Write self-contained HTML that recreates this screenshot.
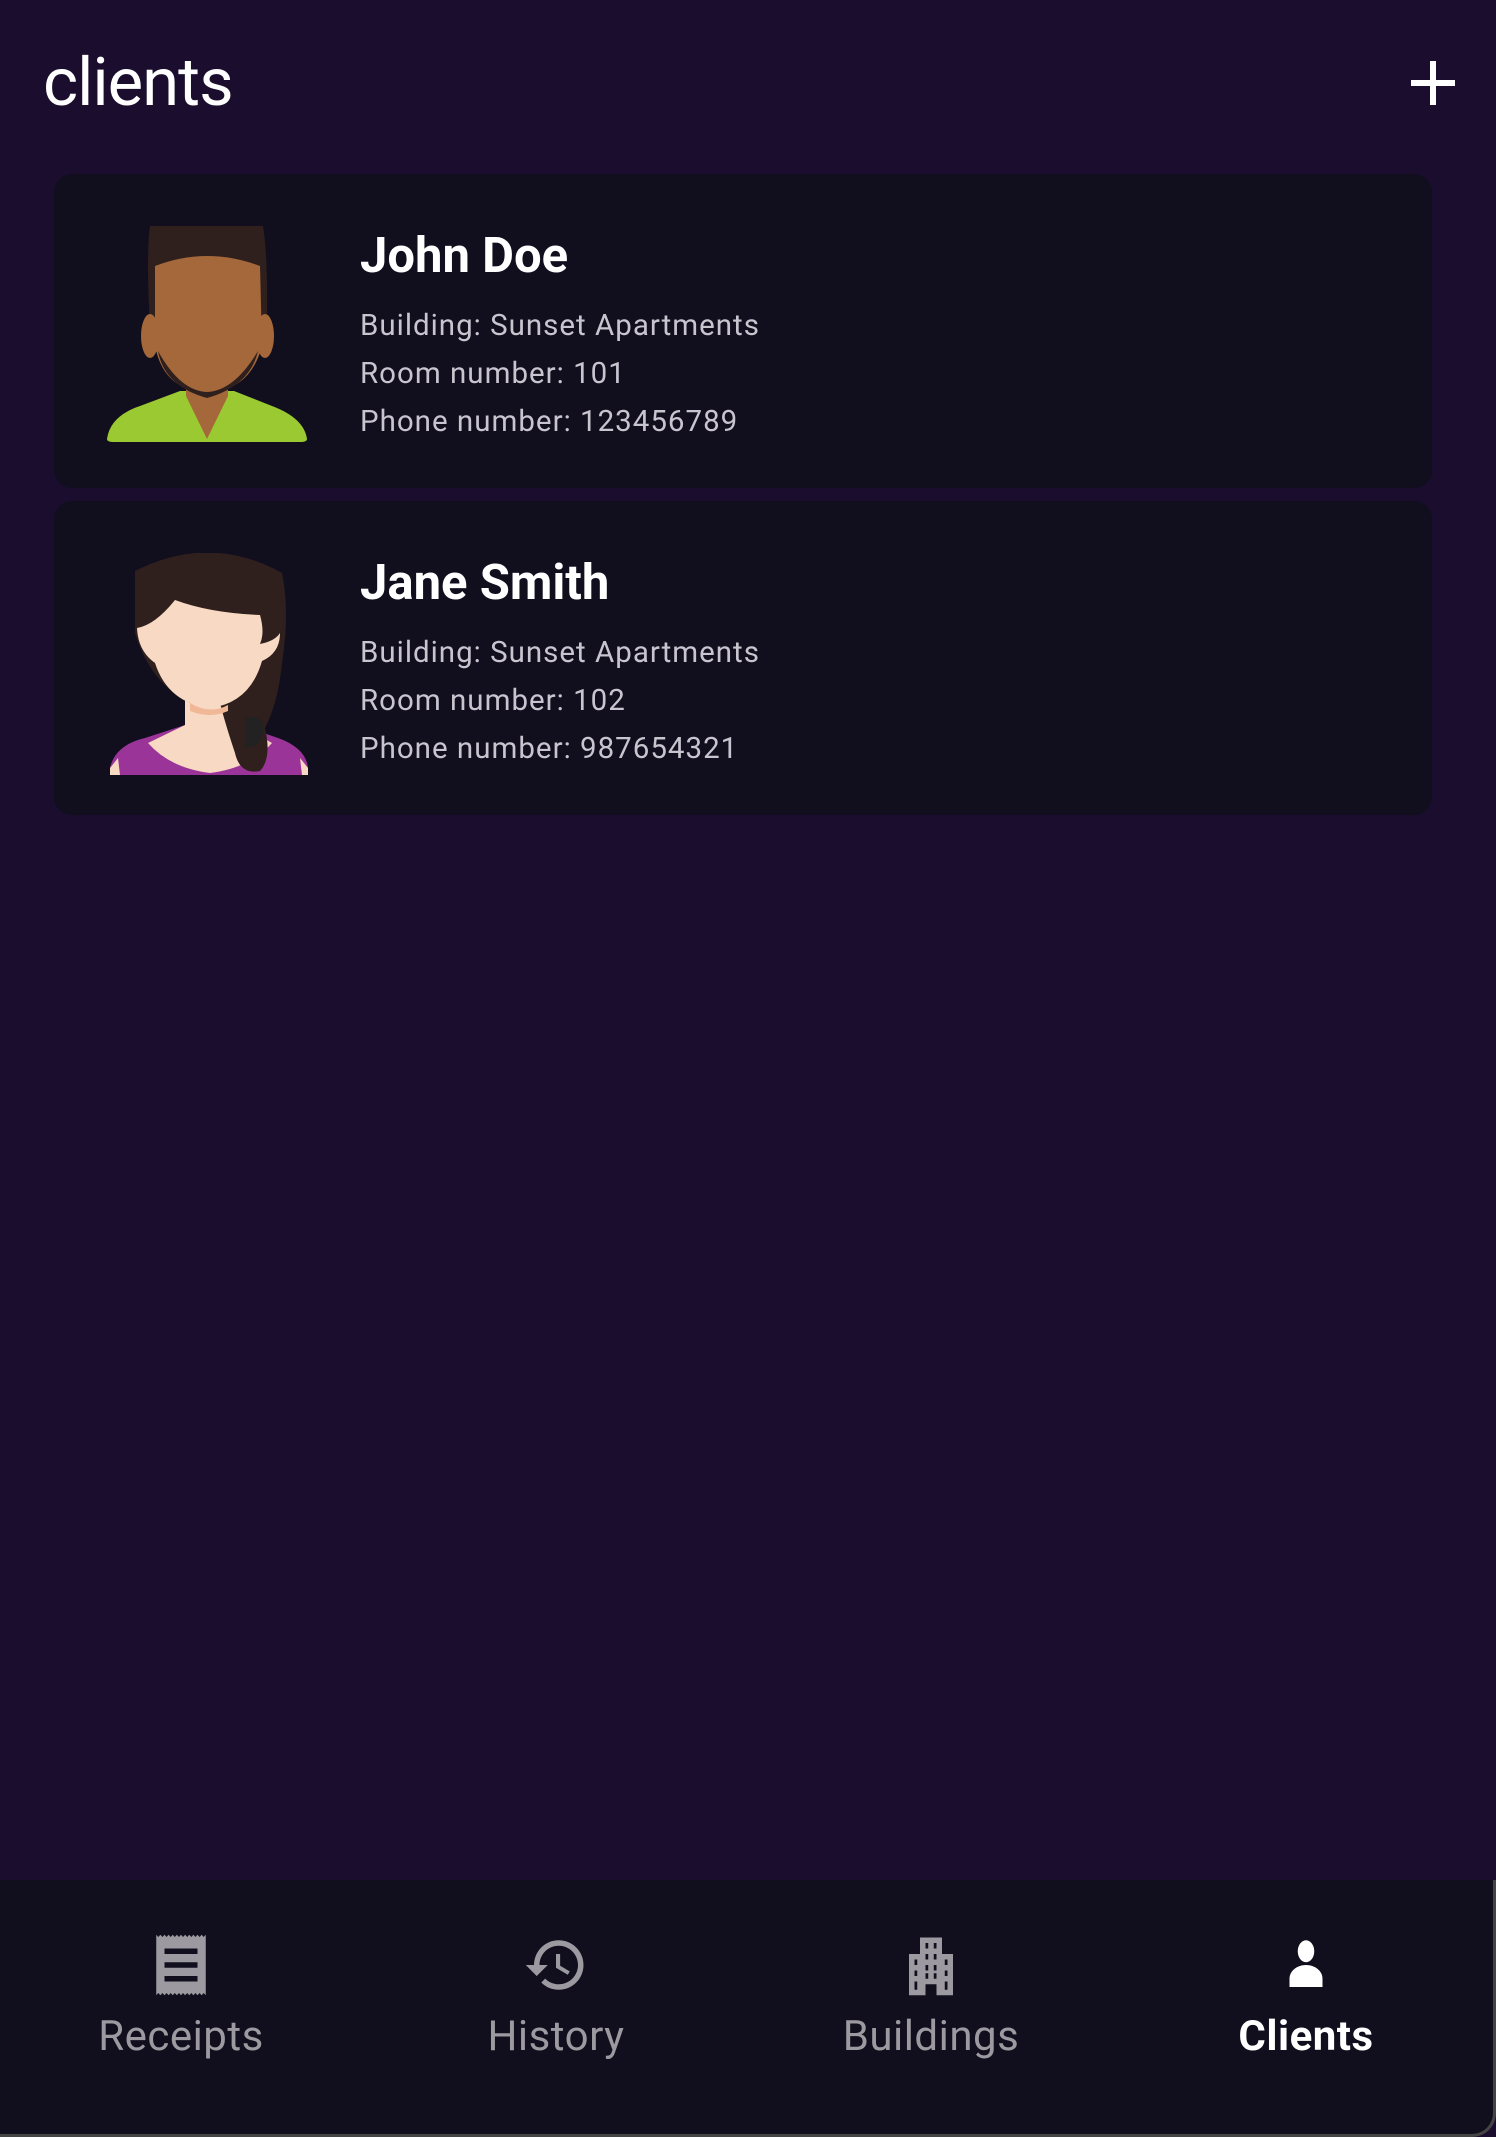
<!DOCTYPE html>
<html><head><meta charset="utf-8"><style>
*{margin:0;padding:0;box-sizing:border-box}
html,body{width:1496px;height:2137px;overflow:hidden;background:#1b0d2e;font-family:"Roboto","Liberation Sans",sans-serif}
.title{position:absolute;left:43px;top:44px;font-size:67px;color:#fff;letter-spacing:-1px}
.plus{position:absolute;left:1411px;top:61px;width:44px;height:44px}
.plus:before{content:"";position:absolute;left:19px;top:0;width:6px;height:44px;background:#fff}
.plus:after{content:"";position:absolute;top:19px;left:0;height:6px;width:44px;background:#fff}
.card{position:absolute;left:54px;width:1378px;height:314px;background:#110e1e;border-radius:18px}
.av{position:absolute;left:46px;width:220px;height:230px}
.name{position:absolute;left:306px;font-size:49px;font-weight:bold;color:#fff}
.line{position:absolute;left:306px;font-size:29.5px;color:#c9c5cf;letter-spacing:1px}
.nav{position:absolute;left:0;top:1880px;width:1496px;height:257px;background:#110e1d;border-right:3px solid #444;border-bottom:3px solid #444;border-bottom-right-radius:24px}
.item{position:absolute;top:0;width:300px;text-align:center}
.item svg{position:absolute;top:52px;left:117px;width:66px;height:66px}
.lbl{position:absolute;top:132px;left:0;width:300px;font-size:42px;color:#9c9aa0;letter-spacing:.5px}
</style></head><body>
<div class="title">clients</div>
<div class="plus"></div>

<div class="card" style="top:174px">
 <svg class="av" style="top:52px" viewBox="0 0 220 230">
  <path d="M7 213 Q10 190 40 180 L80 165 L134 165 L172 180 Q204 192 207 213 Q207 216 200 216 L14 216 Q7 216 7 213Z" fill="#9bc932"/>
  <path d="M86 150 L86 170 L107 213 L128 170 L128 150Z" fill="#a4683a"/>
  <path d="M50 0 Q110 -8 163 0 Q168 30 167 100 L50 100 Q46 30 50 0Z" fill="#2f201e"/>
  <ellipse cx="50" cy="110" rx="9" ry="22" fill="#a4683a"/>
  <ellipse cx="165" cy="110" rx="9" ry="22" fill="#a4683a"/>
  <path d="M55 40 Q107 20 160 40 L162 120 Q150 165 107 166 Q64 165 55 120Z" fill="#a4683a"/>
  <path d="M58 125 Q80 165 107 166 Q134 165 158 125 Q150 160 107 172 Q64 160 58 125Z" fill="#2f201e"/>
 </svg>
 <div class="name" style="top:53px">John Doe</div>
 <div class="line" style="top:135px">Building: Sunset Apartments</div>
 <div class="line" style="top:183px">Room number: 101</div>
 <div class="line" style="top:231px">Phone number: 123456789</div>
</div>

<div class="card" style="top:501px">
 <svg class="av" style="top:52px" viewBox="0 0 220 230">
  <path d="M10 215 Q15 192 45 185 L85 172 L140 172 L178 185 Q206 195 208 215 L208 222 L10 222Z" fill="#9b3498"/>
  <path d="M48 190 Q70 215 110 220 Q150 215 172 190 L140 172 L85 172Z" fill="#f8d9c3"/>
  <path d="M10 215 L18 205 L20 222 L10 222Z" fill="#f8d9c3"/>
  <path d="M200 205 L208 215 L208 222 L202 222Z" fill="#f8d9c3"/>
  <rect x="85" y="140" width="45" height="40" fill="#f8d9c3"/>
  <path d="M35 18 Q110 -20 182 20 Q190 60 182 110 Q178 150 165 175 Q172 205 160 218 Q140 222 135 200 Q125 170 120 150 L90 150 Q50 130 35 80Z" fill="#2f201e"/>
  <path d="M37 75 Q55 72 75 47 Q110 60 160 62 Q165 80 160 91 Q175 88 180 80 Q180 100 162 108 Q150 150 110 155 Q68 150 55 110 Q38 98 37 75Z" fill="#f8d9c3"/>
  <path d="M90 150 Q110 162 128 152 L128 158 Q110 166 90 158Z" fill="#f0b897"/>
  <path d="M145 165 Q165 160 163 180 Q160 195 145 195Z" fill="#222"/>
 </svg>
 <div class="name" style="top:53px">Jane Smith</div>
 <div class="line" style="top:135px">Building: Sunset Apartments</div>
 <div class="line" style="top:183px">Room number: 102</div>
 <div class="line" style="top:231px">Phone number: 987654321</div>
</div>

<div class="nav">
 <div class="item" style="left:31px">
  <svg viewBox="0 0 24 24"><path d="M3 1 L3.75 1.8 4.5 1 5.25 1.8 6 1 6.75 1.8 7.5 1 8.25 1.8 9 1 9.75 1.8 10.5 1 11.25 1.8 12 1 12.75 1.8 13.5 1 14.25 1.8 15 1 15.75 1.8 16.5 1 17.25 1.8 18 1 18.75 1.8 19.5 1 20.25 1.8 21 1 21 23 20.25 22.2 19.5 23 18.75 22.2 18 23 17.25 22.2 16.5 23 15.75 22.2 15 23 14.25 22.2 13.5 23 12.75 22.2 12 23 11.25 22.2 10.5 23 9.75 22.2 9 23 8.25 22.2 7.5 23 6.75 22.2 6 23 5.25 22.2 4.5 23 3.75 22.2 3 23Z M6 6 V8 H18 V6Z M6 11 V13 H18 V11Z M6 16 V18 H18 V16Z" fill="#9c9aa0" fill-rule="evenodd"/></svg>
  <div class="lbl">Receipts</div>
 </div>
 <div class="item" style="left:406px">
  <svg viewBox="0 0 24 24"><path d="M13 3a9 9 0 0 0-9 9H1l3.89 3.89.07.14L9 12H6c0-3.870 3.13-7 7-7s7 3.13 7 7-3.13 7-7 7c-1.93 0-3.68-.79-4.940-2.060l-1.420 1.420A8.954 8.954 0 0 0 13 21a9 9 0 0 0 0-18zm-1 5v5l4.28 2.54.72-1.21-3.5-2.08V8H12z" fill="#9c9aa0"/></svg>
  <div class="lbl">History</div>
 </div>
 <div class="item" style="left:781px">
  <svg viewBox="0 0 24 24"><path d="M4 23V8h4V2h8v6h4v15h-6v-4h-4v4Z M10 4v2h1V4Zm3 0v2h1V4ZM10 8v2h1V8Zm3 0v2h1V8ZM6 10v2h1v-2Zm4 2v2h1v-2Zm3 0v2h1v-2Zm4-2v2h1v-2ZM6 14v2h1v-2Zm11 0v2h1v-2ZM6 18v3h1v-3Zm11 0v3h1v-3ZM10 15v2h1v-2Zm3 0v2h1v-2Z" fill="#9c9aa0" fill-rule="evenodd"/></svg>
  <div class="lbl">Buildings</div>
 </div>
 <div class="item" style="left:1156px">
  <svg viewBox="0 0 24 24"><ellipse cx="12" cy="7" rx="3" ry="4" fill="#fff"/><path d="M6 20v-3c0-3 3-5 6-5s6 2 6 5v3Z" fill="#fff"/></svg>
  <div class="lbl" style="color:#fff;font-weight:bold">Clients</div>
 </div>
</div>
</body></html>
